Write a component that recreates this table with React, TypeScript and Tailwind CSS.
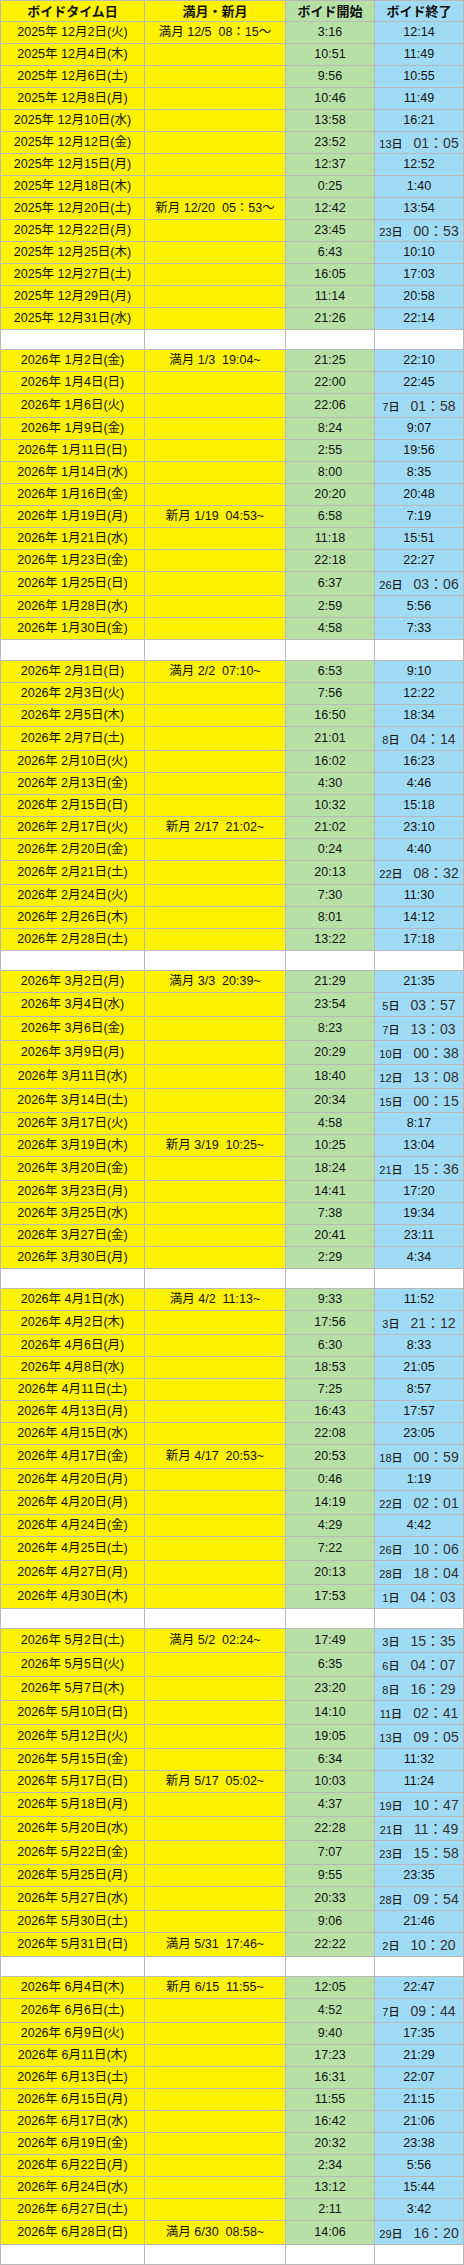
type Row = { date: string; moon: string; start: string; end: string };
type Section = { year: string; tallSpecial: boolean; blank: string; rows: Row[] };

// rows: "日付|満月・新月|開始|終了"
const raw: { year: string; tallSpecial: boolean; blank: string; lines: string[] }[] = [
  {
    year: "2025",
    tallSpecial: false,
    blank: "h-[20px]",
    lines: [
      "12月2日(火)|満月 12/5  08：15〜|3:16|12:14",
      "12月4日(木)||10:51|11:49",
      "12月6日(土)||9:56|10:55",
      "12月8日(月)||10:46|11:49",
      "12月10日(水)||13:58|16:21",
      "12月12日(金)||23:52|13日 01：05",
      "12月15日(月)||12:37|12:52",
      "12月18日(木)||0:25|1:40",
      "12月20日(土)|新月 12/20  05：53〜|12:42|13:54",
      "12月22日(月)||23:45|23日 00：53",
      "12月25日(木)||6:43|10:10",
      "12月27日(土)||16:05|17:03",
      "12月29日(月)||11:14|20:58",
      "12月31日(水)||21:26|22:14",
    ],
  },
  {
    year: "2026",
    tallSpecial: true,
    blank: "h-[21px]",
    lines: [
      "1月2日(金)|満月 1/3  19:04~|21:25|22:10",
      "1月4日(日)||22:00|22:45",
      "1月6日(火)||22:06|7日 01：58",
      "1月9日(金)||8:24|9:07",
      "1月11日(日)||2:55|19:56",
      "1月14日(水)||8:00|8:35",
      "1月16日(金)||20:20|20:48",
      "1月19日(月)|新月 1/19  04:53~|6:58|7:19",
      "1月21日(水)||11:18|15:51",
      "1月23日(金)||22:18|22:27",
      "1月25日(日)||6:37|26日 03：06",
      "1月28日(水)||2:59|5:56",
      "1月30日(金)||4:58|7:33",
    ],
  },
  {
    year: "2026",
    tallSpecial: true,
    blank: "h-[20px]",
    lines: [
      "2月1日(日)|満月 2/2  07:10~|6:53|9:10",
      "2月3日(火)||7:56|12:22",
      "2月5日(木)||16:50|18:34",
      "2月7日(土)||21:01|8日 04：14",
      "2月10日(火)||16:02|16:23",
      "2月13日(金)||4:30|4:46",
      "2月15日(日)||10:32|15:18",
      "2月17日(火)|新月 2/17  21:02~|21:02|23:10",
      "2月20日(金)||0:24|4:40",
      "2月21日(土)||20:13|22日 08：32",
      "2月24日(火)||7:30|11:30",
      "2月26日(木)||8:01|14:12",
      "2月28日(土)||13:22|17:18",
    ],
  },
  {
    year: "2026",
    tallSpecial: true,
    blank: "h-[20px]",
    lines: [
      "3月2日(月)|満月 3/3  20:39~|21:29|21:35",
      "3月4日(水)||23:54|5日 03：57",
      "3月6日(金)||8:23|7日 13：03",
      "3月9日(月)||20:29|10日 00：38",
      "3月11日(水)||18:40|12日 13：08",
      "3月14日(土)||20:34|15日 00：15",
      "3月17日(火)||4:58|8:17",
      "3月19日(木)|新月 3/19  10:25~|10:25|13:04",
      "3月20日(金)||18:24|21日 15：36",
      "3月23日(月)||14:41|17:20",
      "3月25日(水)||7:38|19:34",
      "3月27日(金)||20:41|23:11",
      "3月30日(月)||2:29|4:34",
    ],
  },
  {
    year: "2026",
    tallSpecial: true,
    blank: "h-[20px]",
    lines: [
      "4月1日(水)|満月 4/2  11:13~|9:33|11:52",
      "4月2日(木)||17:56|3日 21：12",
      "4月6日(月)||6:30|8:33",
      "4月8日(水)||18:53|21:05",
      "4月11日(土)||7:25|8:57",
      "4月13日(月)||16:43|17:57",
      "4月15日(水)||22:08|23:05",
      "4月17日(金)|新月 4/17  20:53~|20:53|18日 00：59",
      "4月20日(月)||0:46|1:19",
      "4月20日(月)||14:19|22日 02：01",
      "4月24日(金)||4:29|4:42",
      "4月25日(土)||7:22|26日 10：06",
      "4月27日(月)||20:13|28日 18：04",
      "4月30日(木)||17:53|1日 04：03",
    ],
  },
  {
    year: "2026",
    tallSpecial: true,
    blank: "h-[20px]",
    lines: [
      "5月2日(土)|満月 5/2  02:24~|17:49|3日 15：35",
      "5月5日(火)||6:35|6日 04：07",
      "5月7日(木)||23:20|8日 16：29",
      "5月10日(日)||14:10|11日 02：41",
      "5月12日(火)||19:05|13日 09：05",
      "5月15日(金)||6:34|11:32",
      "5月17日(日)|新月 5/17  05:02~|10:03|11:24",
      "5月18日(月)||4:37|19日 10：47",
      "5月20日(水)||22:28|21日 11：49",
      "5月22日(金)||7:07|23日 15：58",
      "5月25日(月)||9:55|23:35",
      "5月27日(水)||20:33|28日 09：54",
      "5月30日(土)||9:06|21:46",
      "5月31日(日)|満月 5/31  17:46~|22:22|2日 10：20",
    ],
  },
  {
    year: "2026",
    tallSpecial: true,
    blank: "h-[20px]",
    lines: [
      "6月4日(木)|新月 6/15  11:55~|12:05|22:47",
      "6月6日(土)||4:52|7日 09：44",
      "6月9日(火)||9:40|17:35",
      "6月11日(木)||17:23|21:29",
      "6月13日(土)||16:31|22:07",
      "6月15日(月)||11:55|21:15",
      "6月17日(水)||16:42|21:06",
      "6月19日(金)||20:32|23:38",
      "6月22日(月)||2:34|5:56",
      "6月24日(水)||13:12|15:44",
      "6月27日(土)||2:11|3:42",
      "6月28日(日)|満月 6/30  08:58~|14:06|29日 16：20",
    ],
  },
];

const sections: Section[] = raw.map((s) => ({
  year: s.year,
  tallSpecial: s.tallSpecial,
  blank: s.blank,
  rows: s.lines.map((l) => {
    const [date, moon, start, end] = l.split("|");
    return { date: `${s.year}年 ${date}`, moon, start, end };
  }),
}));

const cell = "flex items-center justify-center border-r border-b border-[#b9b9b9] whitespace-pre";
const cols = "grid grid-cols-[144px_141px_89px_89px]";

function EndTime({ value }: { value: string }) {
  const m = value.match(/^(\d+日)\s+(.+)$/);
  if (!m) return <span>{value}</span>;
  return (
    <span className="flex items-baseline">
      <span className="text-[11px] font-medium text-[#1a1a1a]">{m[1]}</span>
      <span className="ml-[11px] text-[14px] text-[#333]">{m[2]}</span>
    </span>
  );
}

function DataRow({ row, tall }: { row: Row; tall: boolean }) {
  const h = tall ? "h-[24px]" : "h-[22px]";
  return (
    <div className={`${cols} ${h}`}>
      <div className={`${cell} bg-[#fff200]`}>{row.date}</div>
      <div className={`${cell} bg-[#fff200]`}>{row.moon}</div>
      <div className={`${cell} bg-[#b7e0a7]`}>{row.start}</div>
      <div className={`${cell} bg-[#a0dbf5]`}>
        <EndTime value={row.end} />
      </div>
    </div>
  );
}

export default function App() {
  return (
    <div className="w-[464px] bg-white font-['Liberation_Sans','Noto_Sans_CJK_JP',sans-serif] text-[12.5px] leading-none text-[#111]">
      <div className="border-l border-t border-[#b9b9b9]">
        <div className={`${cols} h-[21px] font-bold text-[13px]`}>
          <div className={`${cell} bg-[#fff200]`}>ボイドタイム日</div>
          <div className={`${cell} bg-[#fff200]`}>満月・新月</div>
          <div className={`${cell} bg-[#b7e0a7]`}>ボイド開始</div>
          <div className={`${cell} bg-[#a0dbf5]`}>ボイド終了</div>
        </div>
        {sections.map((s, i) => (
          <div key={i}>
            {s.rows.map((r, j) => (
              <DataRow key={j} row={r} tall={s.tallSpecial && /日\s/.test(r.end)} />
            ))}
            <div className={`${cols} ${s.blank}`}>
              <div className={cell} />
              <div className={cell} />
              <div className={cell} />
              <div className={cell} />
            </div>
          </div>
        ))}
      </div>
    </div>
  );
}
